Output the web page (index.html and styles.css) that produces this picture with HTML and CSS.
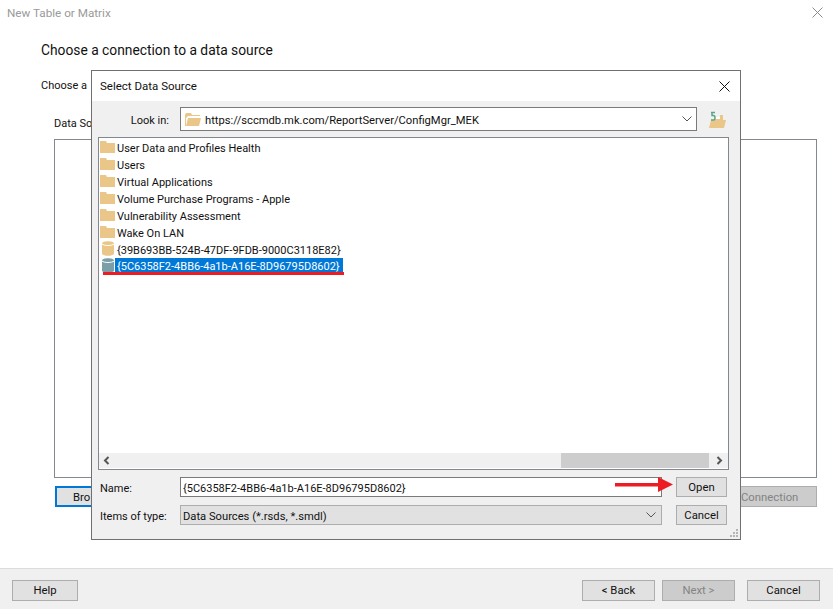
FILE: index.html
```html
<!DOCTYPE html>
<html lang="en">
<head>
  <meta charset="UTF-8">
  <meta name="viewport" content="width=device-width, initial-scale=1.0">
  <title>New Table or Matrix</title>
  <link rel="stylesheet" href="styles.css">
</head>
<body>
  <div class="wizard">
    <div class="wizard-title">
      <span>New Table or Matrix</span>
      <svg class="x-icon" width="11" height="11" viewBox="0 0 11 11"><path d="M.5.5l10 10M10.5.5l-10 10" stroke="#8a8a8a" fill="none"/></svg>
    </div>
    <div class="wizard-body">
      <h2>Choose a connection to a data source</h2>
      <p class="choose">Choose a</p>
      <p class="ds-label">Data So</p>
      <div class="ds-box"></div>
      <div class="ds-actions">
        <button class="btn browse">Bro</button>
        <button class="btn connection" disabled>New Connection</button>
      </div>
    </div>
    <div class="wizard-footer">
      <button class="btn foot">Help</button>
      <div class="foot-right">
        <button class="btn foot">&lt; Back</button>
        <button class="btn foot next" disabled>Next &gt;</button>
        <button class="btn foot cancel">Cancel</button>
      </div>
    </div>
  </div>

  <div class="dialog">
    <div class="dialog-title">
      <span>Select Data Source</span>
      <svg width="11" height="11" viewBox="0 0 11 11"><path d="M.5.5l10 10M10.5.5l-10 10" stroke="#111" fill="none"/></svg>
    </div>
    <div class="dialog-body">
      <div class="look-row">
        <label class="look-label">Look in:</label>
        <div class="combo">
          <svg class="folder" width="16" height="13" viewBox="0 0 16 13"><path d="M0 13V2l1-2h5l1 2h8v1H3L1 5v8z" fill="#eac688"/><path d="M1 13l2-8h13l-2 8z" fill="#eac688"/><path d="M3 3h12v1H3z" fill="#fff"/></svg>
          <span class="combo-text">https://sccmdb.mk.com/ReportServer/ConfigMgr_MEK</span>
          <svg class="chev" width="10" height="6" viewBox="0 0 10 6"><path d="M.5.5L5 5 9.5.5" stroke="#555" fill="none"/></svg>
        </div>
        <svg class="up-icon" width="17" height="17" viewBox="0 0 17 17">
          <path d="M0 17l2-8h4V7h5V4h3v5h3l-2 8z" fill="#eac688"/>
          <path d="M6 8h5V6H6z" fill="#fff"/>
          <path d="M2 1.500h4M3 1v3.500h1.500c2 0 2 4.500 0 4.500H2" stroke="#5aa58c" stroke-width="1.500" fill="none"/>
        </svg>
      </div>
      <div class="file-list">
        <ul class="rows">
          <li><svg class="ico" viewBox="0 0 15 15"><path d="M0 14V2h6l1 2h8v10z" fill="#eac688"/></svg><span>User Data and Profiles Health</span></li>
          <li><svg class="ico" viewBox="0 0 15 15"><path d="M0 14V2h6l1 2h8v10z" fill="#eac688"/></svg><span>Users</span></li>
          <li><svg class="ico" viewBox="0 0 15 15"><path d="M0 14V2h6l1 2h8v10z" fill="#eac688"/></svg><span>Virtual Applications</span></li>
          <li><svg class="ico" viewBox="0 0 15 15"><path d="M0 14V2h6l1 2h8v10z" fill="#eac688"/></svg><span>Volume Purchase Programs - Apple</span></li>
          <li><svg class="ico" viewBox="0 0 15 15"><path d="M0 14V2h6l1 2h8v10z" fill="#eac688"/></svg><span>Vulnerability Assessment</span></li>
          <li><svg class="ico" viewBox="0 0 15 15"><path d="M0 14V2h6l1 2h8v10z" fill="#eac688"/></svg><span>Wake On LAN</span></li>
          <li><svg class="ico" viewBox="0 0 15 15"><path d="M2 2.500c0-3 12-3 12 0v10c0 3-12 3-12 0z" fill="#eac688"/><path d="M2 3c2 2 10 2 12 0" stroke="#fff" fill="none"/></svg><span>{39B693BB-524B-47DF-9FDB-9000C3118E82}</span></li>
          <li class="selected"><svg class="ico" viewBox="0 0 15 15"><path d="M2 2.500c0-3 12-3 12 0v10c0 3-12 3-12 0z" fill="#7c9ea8"/><path d="M2 3c2 2 10 2 12 0" stroke="#fff" fill="none"/></svg><span>{5C6358F2-4BB6-4a1b-A16E-8D96795D8602}</span></li>
        </ul>
        <div class="hscroll">
          <svg width="16" height="15" viewBox="0 0 16 15"><path d="M9.500 4L6 7.500 9.500 11" stroke="#555" stroke-width="2" fill="none"/></svg>
          <div class="track"><div class="thumb"></div></div>
          <svg width="18" height="15" viewBox="0 0 18 15"><path d="M7.500 4L11 7.500 7.500 11" stroke="#555" stroke-width="2" fill="none"/></svg>
        </div>
      </div>
      <div class="form-grid">
        <label>Name:</label>
        <div class="field">{5C6358F2-4BB6-4a1b-A16E-8D96795D8602}</div>
        <button class="btn small">Open</button>
        <label>Items of type:</label>
        <div class="field select">
          <span>Data Sources (*.rsds, *.smdl)</span>
          <svg width="10" height="6" viewBox="0 0 10 6"><path d="M.5.5L5 5 9.500.5" stroke="#555" fill="none"/></svg>
        </div>
        <button class="btn small">Cancel</button>
      </div>
    </div>
    <svg class="grip" width="10" height="10" viewBox="0 0 10 10"><path d="M7 1h2v2H7zM4 4h2v2H4zM7 4h2v2H7zM1 7h2v2H1zM4 7h2v2H4zM7 7h2v2H7z" fill="#b5b5b5"/></svg>
  </div>

  <!-- red annotations on top of the screenshot -->
  <div class="underline"></div>
  <svg class="arrow" width="60" height="16" viewBox="0 0 60 16"><path d="M0 6h44v3.500H0z" fill="#ed1c24"/><path d="M43 0l15 7.500L43 15z" fill="#ed1c24"/></svg>
</body>
</html>
```

FILE: styles.css
```css
* {
  box-sizing: border-box;
}
html, body {
  margin: 0;
  height: 100%;
}
body {
  font-family: Roboto, "Noto Sans", sans-serif;
  font-size: 11px;
  color: #111;
  background-color: #fff;
  overflow: hidden;
  position: relative;
}
.wizard {
  display: flex;
  flex-direction: column;
  height: 609px;
}
.wizard-title {
  display: flex;
  justify-content: space-between;
  align-items: center;
  height: 25px;
  padding: 0 10px 0 7px;
  font-size: 11.700px;
  color: #9a9a9a;
}
.wizard-body {
  flex: 1;
  padding: 16px 16px 0 41px;
}
.wizard-body h2 {
  margin: 0;
  font-size: 13.800px;
  font-weight: 400;
  line-height: 19px;
}
.choose {
  margin: 18px 0 0;
  line-height: 16px;
}
.ds-label {
  margin: 22px 0 0 13px;
  line-height: 16px;
}
.ds-box {
  margin: 7px 0 0 13px;
  height: 339px;
  border: 1px solid #828790;
}
.ds-actions {
  display: flex;
  justify-content: space-between;
  margin: 8px 0 0 14px;
}
.btn {
  font-family: inherit;
  font-size: 11.300px;
  color: #111;
  background-color: #e1e1e1;
  border: 1px solid #adadad;
  padding: 0;
}
.btn[disabled] {
  background-color: #ccc;
  color: #838383;
}
.browse {
  width: 73px;
  height: 21px;
  border: 2px solid #0078d7;
  text-align: left;
  padding: 1px 0 0 16px;
}
.connection {
  width: 120px;
  height: 21px;
  padding-top: 1px;
}
.wizard-footer {
  display: flex;
  justify-content: space-between;
  align-items: center;
  height: 41px;
  padding: 2px 13px 0 12px;
  background-color: #f0f0f0;
  border-top: 1px solid #dcdcdc;
}
.foot {
  width: 66px;
  height: 21px;
}
.foot-right {
  display: flex;
  gap: 7px;
}
.foot-right .foot {
  width: 73px;
}
.foot-right .cancel {
  margin-left: 5px;
}
/* dialog floats over the wizard */
.dialog {
  position: absolute;
  left: 91px;
  top: 70px;
  width: 650px;
  height: 470px;
  display: flex;
  flex-direction: column;
  border: 1px solid #707070;
  background-color: #f0f0f0;
}
.dialog-title {
  display: flex;
  justify-content: space-between;
  align-items: center;
  height: 30px;
  padding: 0 10px 0 8px;
  background-color: #fff;
  font-size: 11.500px;
}
.dialog-body {
  flex: 1;
  padding: 6px 12px 0 6px;
}
.look-row {
  display: flex;
  align-items: center;
  height: 24px;
}
.look-label {
  width: 76px;
  text-align: right;
  padding: 4px 5px 0 0;
}
.form-grid label {
  padding-top: 3px;
}
.look-label, .form-grid label {
  line-height: 16px;
}
.combo {
  width: 517px;
  height: 24px;
  margin-left: 6px;
  display: flex;
  align-items: center;
  padding: 0 4px;
  background-color: #fff;
  border: 1px solid #7a7a7a;
  font-size: 11.200px;
}
.combo-text {
  flex: 1;
  margin-left: 4px;
  padding-top: 2px;
}
.up-icon {
  margin-left: 12px;
}
.file-list {
  margin-top: 6px;
  height: 333px;
  width: 631px;
  display: flex;
  flex-direction: column;
  background-color: #fff;
  border: 1px solid #828790;
}
.rows {
  flex: 1;
  list-style: none;
  margin: 0;
  padding: 2px 0 0 1px;
}
.rows li {
  display: flex;
  align-items: center;
  height: 17px;
  white-space: nowrap;
}
.ico {
  width: 15px;
  height: 15px;
  margin-top: -4px;
  flex: none;
}
.rows li span {
  line-height: 17px;
  padding: 0 3px 0 2px;
}
.rows li.selected span {
  align-self: flex-start;
  height: 15px;
  margin-top: -1px;
  line-height: 18px;
  background-color: #0078d7;
  color: #fff;
}
.hscroll {
  display: flex;
  align-items: center;
  height: 15px;
  margin-bottom: 1px;
  background-color: #f0f0f0;
}
.track {
  flex: 1;
  height: 15px;
}
.thumb {
  margin-left: 446px;
  width: 148px;
  height: 15px;
  background-color: #cdcdcd;
}
.form-grid {
  display: grid;
  grid-template-columns: 80px 482px 51px;
  grid-template-rows: 20px 20px;
  row-gap: 8px;
  margin-top: 7px;
  padding-left: 2px;
  align-items: center;
}
.form-grid .small {
  width: 51px;
  height: 20px;
  margin-left: 14px;
}
.field {
  height: 20px;
  line-height: 20px;
  padding: 1px 2px 0;
  background-color: #fff;
  border: 1px solid #7a7a7a;
  white-space: nowrap;
}
.field.select {
  display: flex;
  justify-content: space-between;
  align-items: center;
  background-color: #e1e1e1;
  border-color: #adadad;
  padding: 0 5px 0 2px;
  line-height: 18px;
  font-size: 11.200px;
}
.field.select span {
  padding-top: 4px;
}
.grip {
  position: absolute;
  right: 1px;
  bottom: 1px;
}
.underline {
  position: absolute;
  left: 103px;
  top: 272px;
  width: 241px;
  height: 3px;
  background-color: #ed1c24;
}
.arrow {
  position: absolute;
  left: 615px;
  top: 477px;
}
```
